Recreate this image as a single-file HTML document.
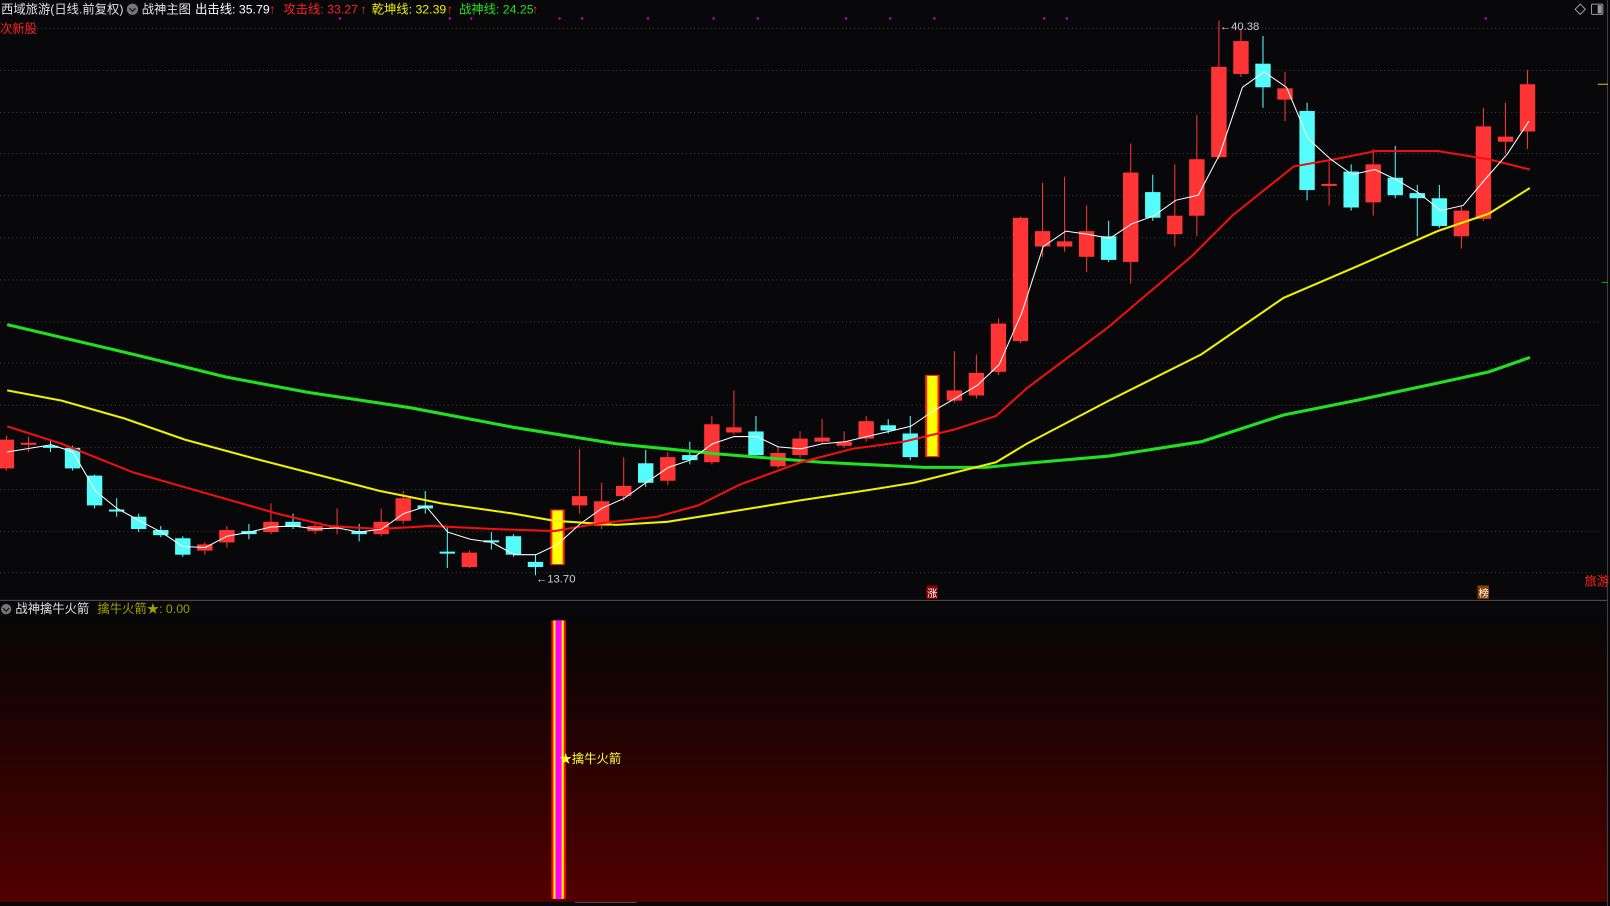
<!DOCTYPE html>
<html><head><meta charset="utf-8"><style>
html,body{margin:0;padding:0;background:#08080a;overflow:hidden}
svg{display:block}
text{font-family:"Liberation Sans","Noto Sans CJK SC",sans-serif}
</style></head><body>
<svg id="s" width="1610" height="906" viewBox="0 0 1568 882" preserveAspectRatio="none" xmlns="http://www.w3.org/2000/svg">
<defs>
<linearGradient id="g" x1="0" y1="0" x2="0" y2="1">
<stop offset="0" stop-color="#060606"/><stop offset="0.35" stop-color="#1e0303"/><stop offset="1" stop-color="#520000"/>
</linearGradient>
</defs>
<rect width="1568" height="882" fill="#08080a"/>
<rect x="0" y="600" width="1565" height="278" fill="url(#g)"/>
<g id="grid" stroke="#3a3a3a" stroke-width="1" stroke-dasharray="1 3"></g>
<line x1="0" y1="584.5" x2="1565" y2="584.5" stroke="#505050"/>
<line x1="1565.5" y1="0" x2="1565.5" y2="882" stroke="#444"/>
<line x1="1556" y1="82" x2="1566" y2="82" stroke="#c8c800"/>
<line x1="1560" y1="275" x2="1566" y2="275" stroke="#00b000"/>
<g id="dots" fill="#e000e0"></g>
<g id="candles"></g>
<polyline fill="none" stroke="#20e020" stroke-width="3" points="7,316 130,345 220,367 300,382 400,397 500,416 600,432 700,442 800,450 900,455 960,455 1000,451 1080,444 1170,430 1250,404 1320,390 1400,373 1450,362 1490,348"/>
<polyline fill="none" stroke="#f0f000" stroke-width="2" points="7,380 60,390 120,407 180,428 250,447 320,465 370,478 430,490 500,500 540,507 600,511 650,508 700,500 780,487 840,478 890,470 930,460 970,450 1000,432 1080,390 1170,345 1250,290 1320,260 1400,225 1450,208 1490,183"/>
<polyline fill="none" stroke="#f01010" stroke-width="2" points="7,415 60,432 130,460 200,480 270,500 320,512 370,515 420,512 480,515 540,517 580,510 640,503 680,492 720,472 780,450 830,437 880,430 930,418 970,405 1000,378 1080,318 1160,250 1200,210 1260,162 1300,155 1340,147 1400,147 1450,155 1490,165"/>
<polyline fill="none" stroke="#ffffff" stroke-width="1" points="7,440 50,433 71,440 93,478 114,495 136,507 157,518 178,532 200,533 221,522 243,518 264,513 286,512 307,515 329,514 350,518 372,515 393,500 415,493 436,518 458,525 479,528 501,540 522,540 543,530 565,510 586,495 608,485 629,470 651,455 672,448 694,432 715,425 737,425 758,435 780,437 801,432 823,430 844,425 866,420 887,415 909,400 930,388 952,375 973,355 995,305 1016,240 1038,225 1059,228 1081,232 1102,218 1124,210 1145,195 1167,190 1188,150 1210,85 1231,70 1253,85 1274,135 1296,155 1317,170 1339,165 1360,175 1382,188 1403,205 1425,200 1446,175 1468,150 1489,118"/>
<!-- top labels -->
<text x="1" y="13" font-size="12" fill="#e0e0e0">西域旅游(日线.前复权)</text>
<circle cx="129" cy="9" r="5.5" fill="#777"/><path d="M126 8 L129 11 L132 8" stroke="#222" stroke-width="1.5" fill="none"/>
<text x="138" y="13" font-size="12" fill="#e0e0e0">战神主图</text>
<text x="190" y="13" font-size="12" fill="#ffffff">出击线: 35.79</text><text x="262" y="13" font-size="12" fill="#ff3030">↑</text>
<text x="276" y="13" font-size="12" fill="#ff2020">攻击线: 33.27</text><text x="351" y="13" font-size="12" fill="#ff3030">↑</text>
<text x="362" y="13" font-size="12" fill="#f0f000">乾坤线: 32.39</text><text x="435" y="13" font-size="12" fill="#ff3030">↑</text>
<text x="447" y="13" font-size="12" fill="#20e020">战神线: 24.25</text><text x="518" y="13" font-size="12" fill="#ff3030">↑</text>
<text x="0" y="32" font-size="12" fill="#ff2020">次新股</text>
<path d="M1539 4 L1544 9 L1539 14 L1534 9 Z" fill="none" stroke="#999"/>
<rect x="1550" y="4" width="11" height="10" rx="1" fill="none" stroke="#999"/><rect x="1556" y="5" width="4" height="8" fill="#999"/>
<text x="1188" y="29" font-size="11" fill="#cccccc">←40.38</text>
<text x="522" y="567" font-size="11" fill="#cccccc">←13.70</text>
<rect x="902" y="570" width="11" height="13" fill="#8a0000"/><text x="903" y="581" font-size="10" fill="#fff">涨</text>
<rect x="1439" y="570" width="11" height="13" fill="#8a4000"/><text x="1440" y="581" font-size="10" fill="#fff">榜</text>
<text x="1543" y="570" font-size="12" fill="#ff2020">旅游</text>
<!-- lower panel -->
<circle cx="6" cy="593" r="5" fill="#777"/><path d="M3 592 L6 595 L9 592" stroke="#222" stroke-width="1.5" fill="none"/>
<text x="15" y="597" font-size="12" fill="#e0e0e0">战神擒牛火箭</text>
<text x="95" y="597" font-size="12" fill="#a0a000">擒牛火箭★: 0.00</text>
<rect x="537" y="604" width="14" height="271" fill="#ff1010"/>
<rect x="539" y="604" width="10" height="271" fill="#ffff00"/>
<rect x="541" y="604" width="6" height="271" fill="#ff00ff"/>
<text x="545" y="743" font-size="12" fill="#ffff30">★擒牛火箭</text>
<line x1="560" y1="878.5" x2="620" y2="878.5" stroke="#555"/>
</svg>
<script>
var NS="http://www.w3.org/2000/svg";
function el(p,t,a){var e=document.createElementNS(NS,t);for(var k in a)e.setAttribute(k,a[k]);p.appendChild(e);return e;}
var grid=document.getElementById('grid');
for(var y=27;y<580;y+=40.8){el(grid,'line',{x1:0,y1:Math.round(y)+.5,x2:1560,y2:Math.round(y)+.5});}
var dots=document.getElementById('dots');
[330,437,458,544,566,630,694,737,823,866,909,1016,1038,1446].forEach(function(x){el(dots,'rect',{x:x,y:17,width:2,height:2});});
// [color, bodyTop, bodyBot, wickTop, wickBot]
var C=[["r",428,456,424,458],["r",431,433,425,440],["c",434,436,428,440],["c",436,456,434,458],["c",463,492,462,495],["c",496,498,485,503],["c",503,515,500,518],["c",516,521,512,523],["c",524,540,522,542],["r",530,536,528,540],
["r",516,528,512,533],["c",517,520,510,525],["r",508,518,490,520],["c",508,513,500,515],["r",512,517,510,520],["r",512,514,495,520],["c",517,520,510,527],["r",508,520,495,522],["r",485,507,478,510],["c",492,495,478,500],
["c",537,539,512,553],["r",538,552,536,553],["c",526,528,518,535],["c",522,540,520,542],["c",547,552,540,560],["y",496,550,494,552],["r",483,492,437,500],["r",488,512,470,515],["r",473,483,445,488],["c",451,470,438,474],
["r",445,468,440,472],["c",443,448,430,452],["r",413,450,405,452],["r",416,421,380,423],["c",420,443,405,445],["r",441,454,435,456],["r",427,443,420,446],["r",426,430,408,432],["r",430,434,420,436],["r",410,427,405,430],
["c",414,419,408,422],["c",422,445,405,448],["y",365,445,363,447],["r",380,390,342,392],["r",363,385,345,388],["r",315,362,310,365],["r",212,332,211,334],["r",225,240,178,250],["r",235,240,172,245],["r",225,250,200,265],
["c",230,253,215,255],["r",168,255,140,276],["c",187,212,170,215],["r",210,228,160,240],["r",155,210,112,230],["r",65,153,20,155],["r",40,72,28,75],["c",62,85,35,105],["r",86,97,70,118],["c",108,185,100,195],
["r",179,181,155,200],["c",167,202,160,205],["r",160,197,145,210],["c",173,190,142,193],["c",188,193,180,230],["c",193,220,180,222],["r",205,230,200,242],["r",123,213,105,215],["r",133,138,100,150],["r",82,128,68,145]];
var g=document.getElementById('candles');
C.forEach(function(c,i){
 var x=543+(i-25)*21.47;var col=c[0]=="r"?"#ff3434":"#54fcfc";
 if(c[0]=="y"){el(g,'rect',{x:x-7,y:c[1],width:14,height:c[2]-c[1],fill:"#ff2020"});el(g,'rect',{x:x-5,y:c[1]+1,width:10,height:c[2]-c[1]-2,fill:"#ffff00"});return;}
 el(g,'line',{x1:x,y1:c[3],x2:x,y2:c[4],stroke:col,"stroke-width":1});
 el(g,'rect',{x:x-7.5,y:c[1],width:15,height:Math.max(2,c[2]-c[1]),fill:col});
});
</script>
</body></html>
